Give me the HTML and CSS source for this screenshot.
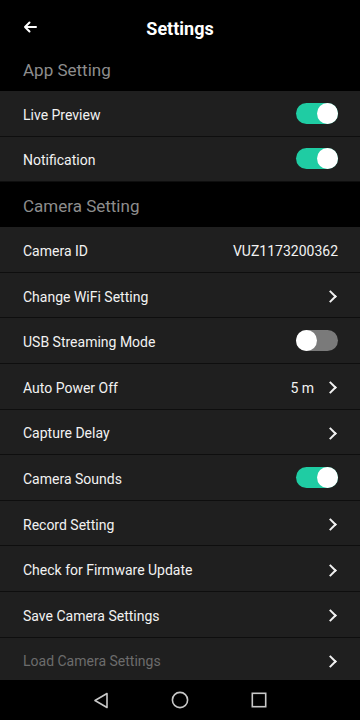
FILE: index.html
```html
<!DOCTYPE html>
<html>
<head>
<meta charset="utf-8">
<link rel="stylesheet" href="styles.css">
</head>
<body>
<div class="screen">
  <header class="topbar">
    <svg class="back" width="14" height="12" viewBox="0 0 14 12"><path d="M13 6H2M6.5 1.5L2 6l4.5 4.5" fill="none" stroke="#fff" stroke-width="2" stroke-linecap="round" stroke-linejoin="round"/></svg>
    <h1 class="title">Settings</h1>
  </header>
  <main class="content">
    <div class="section-title">App Setting</div>
    <div class="row"><span class="label">Live Preview</span><span class="toggle on"></span></div>
    <div class="row"><span class="label">Notification</span><span class="toggle on"></span></div>
    <div class="section-title">Camera Setting</div>
    <div class="row"><span class="label">Camera ID</span><span class="value">VUZ1173200362</span></div>
    <div class="row"><span class="label">Change WiFi Setting</span><span class="chev"></span></div>
    <div class="row"><span class="label">USB Streaming Mode</span><span class="toggle off"></span></div>
    <div class="row"><span class="label">Auto Power Off</span><span class="right"><span class="value">5 m</span><span class="chev"></span></span></div>
    <div class="row"><span class="label">Capture Delay</span><span class="chev"></span></div>
    <div class="row"><span class="label">Camera Sounds</span><span class="toggle on"></span></div>
    <div class="row"><span class="label">Record Setting</span><span class="chev"></span></div>
    <div class="row"><span class="label">Check for Firmware Update</span><span class="chev"></span></div>
    <div class="row"><span class="label">Save Camera Settings</span><span class="chev"></span></div>
    <div class="row"><span class="label dim">Load Camera Settings</span><span class="chev"></span></div>
  </main>
  <nav class="navbar">
    <svg width="16" height="17" viewBox="0 0 16 17"><path d="M14 1.5L2 8.5l12 7z" fill="none" stroke="#c8c8c8" stroke-width="1.6" stroke-linejoin="round"/></svg>
    <svg width="18" height="18" viewBox="0 0 18 18"><circle cx="9" cy="9" r="7.6" fill="none" stroke="#c8c8c8" stroke-width="1.6"/></svg>
    <svg width="16" height="16" viewBox="0 0 16 16"><rect x="1.3" y="1.3" width="13.4" height="13.4" fill="none" stroke="#c8c8c8" stroke-width="1.6"/></svg>
  </nav>
</div>
</body>
</html>
```

FILE: styles.css
```css
* { box-sizing: border-box; }
html, body { margin: 0; padding: 0; background: #000; }
body { font-family: Roboto, "Noto Sans", "Liberation Sans", sans-serif; color: #fff; }
.screen { width: 360px; height: 720px; display: flex; flex-direction: column; background: #000; overflow: hidden; }
.topbar { height: 46px; padding: 10px 0 0 23px; display: flex; align-items: center; position: relative; flex-shrink: 0; }
.back { display: block; margin-top: -2px; }
.title { position: absolute; left: 0; right: 0; top: 10px; height: 36px; margin: 0; display: flex; align-items: center; justify-content: center; font-size: 18px; font-weight: 700; pointer-events: none; }
.content { flex: 1; min-height: 0; overflow: hidden; display: flex; flex-direction: column; }
.section-title { height: 45px; flex-shrink: 0; padding: 3px 23px 0; display: flex; align-items: center; font-size: 17px; color: #8d8d8d; }
.row { height: 45.6px; flex-shrink: 0; border-bottom: 1px solid #0e0e0e; background: #1f1f1f; display: flex; align-items: center; justify-content: space-between; padding: 0 22px 0 23px; font-size: 14px; }
.label { color: #f2f2f2; padding-top: 3px; }
.label.dim { color: #6c6c6c; }
.value { color: #f2f2f2; font-size: 14px; padding-top: 3px; }
.right { display: flex; align-items: center; gap: 12px; }
.chev { width: 12px; height: 14px; position: relative; }
.chev::before { content: ""; position: absolute; width: 7px; height: 7px; border-top: 2px solid #f2f2f2; border-right: 2px solid #f2f2f2; transform: rotate(45deg); left: 0; top: 4px; }
.toggle { width: 42px; height: 21px; border-radius: 11px; position: relative; }
.toggle.on { background: #1fcca3; }
.toggle.off { background: #7a7a7a; }
.toggle::after { content: ""; position: absolute; top: 0; width: 21px; height: 21px; border-radius: 50%; background: #fff; }
.toggle.on::after { right: 0; }
.toggle.off::after { left: 0; }
.navbar { height: 40px; flex-shrink: 0; display: flex; align-items: center; justify-content: center; gap: 62px; background: #000; }
```
